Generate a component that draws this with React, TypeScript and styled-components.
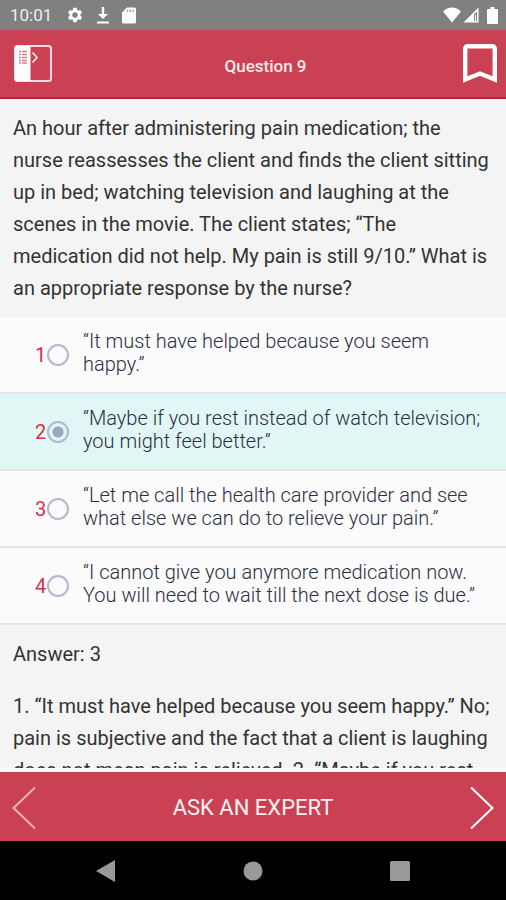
import React, { useState } from "react";
import styled, { createGlobalStyle } from "styled-components";

const GlobalStyle = createGlobalStyle`
  *, *::before, *::after { box-sizing: border-box; }
  body { margin: 0; background: #f4f4f4; font-family: Roboto, "Liberation Sans", sans-serif; }
  button { font: inherit; color: inherit; background: none; border: 0; padding: 0; cursor: pointer; }
`;

const Screen = styled.div`
  height: 100vh;
  display: flex;
  flex-direction: column;
`;

const StatusBar = styled.div`
  flex: none;
  height: 30px;
  padding: 0 8px 0 10px;
  display: flex;
  align-items: center;
  justify-content: space-between;
  background: #808080;
  color: #fff;
  font-size: 17px;
`;

const StatusGroup = styled.div<{ $gap: number }>`
  display: flex;
  align-items: center;
  gap: ${(p) => p.$gap}px;
  svg { display: block; }
`;

const Clock = styled.span`
  color: #eee;
  margin-right: 2px;
`;

const TopBar = styled.header`
  flex: none;
  height: 69px;
  padding: 0 9px 0 14px;
  display: grid;
  grid-template-columns: 1fr auto 1fr;
  align-items: center;
  background: #cb4154;
  border-bottom: 2px solid #bd1e38;
  color: #fff;
`;

const Title = styled.h1`
  margin: 0;
  padding: 4px 0 0 24px;
  font-size: 17px;
  font-weight: 500;
  color: #fde9ec;
  margin-right: 4px;
`;

const IconButton = styled.button<{ $align?: "start" | "end"; $faded?: boolean }>`
  justify-self: ${(p) => p.$align ?? "start"};
  opacity: ${(p) => (p.$faded ? 0.6 : 1)};
  svg { display: block; }
`;

const Content = styled.main`
  flex: 1;
  min-height: 0;
  overflow: hidden;
  background: #f4f4f4;
  border-bottom: 4px solid #fafafa;
`;

const Passage = styled.section`
  padding: 13px 12px 13px 13px;
  color: #333;
  font-size: 20px;
  line-height: 32px;
`;

const Paragraph = styled.p`
  margin: 0;
  & + & { margin-top: 20px; }
`;

const Options = styled.fieldset`
  margin: 0;
  padding: 0;
  border: 0;
  min-width: 0;
`;

const Option = styled.label<{ $selected: boolean }>`
  min-height: 77px;
  padding: 13px 16px 12px 35px;
  display: grid;
  grid-template-columns: 12px 22px 1fr;
  align-items: center;
  background: ${(p) => (p.$selected ? "#e0f7f6" : "#fbfbfb")};
  border-bottom: 2px solid #e3e6e6;
  font-size: 20px;
  line-height: 23px;
  cursor: pointer;
`;

const OptionNumber = styled.span`
  color: #d0354b;
`;

const Radio = styled.input`
  appearance: none;
  width: 22px;
  height: 22px;
  margin: 0;
  border: 2px solid #b3b8cc;
  border-radius: 50%;
  cursor: pointer;
  &:checked {
    background: radial-gradient(circle, #9ba9bf 0 5px, transparent 6px);
  }
`;

const OptionText = styled.span`
  padding: 0 0 4px 14px;
  color: #2c2f42;
  font-weight: 300;
`;

const ActionBar = styled.footer`
  flex: none;
  height: 69px;
  padding: 2px 11px 0;
  display: flex;
  align-items: center;
  justify-content: space-between;
  background: #cb4154;
  color: #fff;
`;

const AskButton = styled.button`
  && { color: #fff0f2; }
  && { font-size: 22px; }
`;

const SystemNav = styled.nav`
  flex: none;
  height: 59px;
  padding: 0 96px;
  display: flex;
  align-items: center;
  justify-content: space-between;
  background: #000;
  svg { display: block; }
`;

const options = [
  "“It must have helped because you seem happy.”",
  "“Maybe if you rest instead of watch television; you might feel better.”",
  "“Let me call the health care provider and see what else we can do to relieve your pain.”",
  "“I cannot give you anymore medication now. You will need to wait till the next dose is due.”",
];

const GearIcon = () => (
  <svg width="18" height="18" viewBox="0 0 24 24" fill="#fff" aria-hidden="true">
    <path d="M19.14 12.94c.04-.3.06-.61.06-.94 0-.32-.02-.64-.07-.94l2.03-1.58a.49.49 0 0 0 .12-.61l-1.92-3.32a.49.49 0 0 0-.59-.22l-2.39.96c-.5-.38-1.03-.7-1.62-.94l-.36-2.54a.48.48 0 0 0-.48-.41h-3.84a.48.48 0 0 0-.47.41l-.36 2.54c-.59.24-1.13.57-1.62.94l-2.39-.96a.48.48 0 0 0-.59.22L2.74 8.87a.48.48 0 0 0 .12.61l2.03 1.58c-.05.3-.09.63-.09.94s.02.64.07.94l-2.03 1.58a.49.49 0 0 0-.12.61l1.92 3.32c.12.22.37.29.59.22l2.39-.96c.5.38 1.03.7 1.62.94l.36 2.54c.05.24.24.41.48.41h3.84c.24 0 .44-.17.47-.41l.36-2.54c.59-.24 1.13-.56 1.62-.94l2.39.96c.22.08.47 0 .59-.22l1.92-3.32a.48.48 0 0 0-.12-.61zM12 15.6A3.6 3.6 0 1 1 12 8.400a3.600 3.600 0 0 1 0 7.200z" />
  </svg>
);

const DownloadIcon = () => (
  <svg width="14" height="17" viewBox="0 0 14 17" fill="#fff" aria-hidden="true">
    <path d="M5.800 0h2.400v7H12l-5 5-5-5h3.800zM1 14.500h12v2H1z" />
  </svg>
);

const CardIcon = () => (
  <svg width="14" height="17" viewBox="0 0 14 17" aria-hidden="true">
    <path d="M5 .5h7.500A1.500 1.500 0 0 1 14 2v13a1.500 1.500 0 0 1-1.500 1.500h-11A1.500 1.500 0 0 1 0 15V5.500z" fill="#fff" />
    <path d="M5.500 2.500v2.500M8.300 2.500v2.500M11.100 2.500v2.500" stroke="#aaa" strokeWidth="1.500" />
  </svg>
);

const WifiIcon = () => (
  <svg width="18" height="16" viewBox="0 0 18 16" fill="#fff" aria-hidden="true">
    <path d="M0 4.500Q4 .5 9 .5t9 4L9 15.500z" />
  </svg>
);

const SignalIcon = () => (
  <svg width="16" height="16" viewBox="0 0 16 16" fill="#fff" aria-hidden="true">
    <path d="M.5 15.500L15.500.5v15zM11 7.500V14h3V4.500z" fillRule="evenodd" />
    <path d="M12 8h1v6h-1z" />
  </svg>
);

const BatteryIcon = () => (
  <svg width="11" height="17" viewBox="0 0 11 17" fill="#fff" aria-hidden="true">
    <path d="M3.500 0h4v2H10a1 1 0 0 1 1 1v13a1 1 0 0 1-1 1H1a1 1 0 0 1-1-1V3a1 1 0 0 1 1-1h2.500z" />
  </svg>
);

const Signals = styled(StatusGroup)`
  svg:last-child { margin-left: 6px; }
`;

const PanelIcon = () => (
  <svg width="38" height="37" viewBox="0 0 38 37" aria-hidden="true">
    <rect x="1" y="1" width="36" height="35" rx="2.500" fill="none" stroke="#f7dfe3" strokeWidth="2" />
    <path d="M3 1h13.500v35H3a2 2 0 0 1-2-2V3a2 2 0 0 1 2-2z" fill="#fff" />
    <path d="M5 6.500h2m1 0h5M5 9.500h2m1 0h5M5 12.500h2m1 0h5M5 15.500h2m1 0h5M5 18h2m1 0h5" stroke="#d97a88" strokeWidth="1.500" />
    <path d="M18.500 7.500l4.500 5-4.500 5" fill="none" stroke="#f9e2e6" strokeWidth="1.800" />
  </svg>
);

const BookmarkIcon = () => (
  <svg width="34" height="39" viewBox="0 0 34 39" aria-hidden="true">
    <path d="M2.200 35.500V4.500A2.200 2.200 0 0 1 4.400 2.300h25.200a2.200 2.200 0 0 1 2.200 2.200v31L17 29.500z" fill="none" stroke="#fff" strokeWidth="4.400" />
  </svg>
);

const Chevron = ({ flip }: { flip?: boolean }) => (
  <svg width="26" height="44" viewBox="0 0 26 44" fill="none" stroke="#fff" strokeWidth="2" aria-hidden="true">
    <path d={flip ? "M2 1.500l21.500 20.500L2 42.500" : "M24 1.500L2.500 22 24 42.500"} />
  </svg>
);

export default function App() {
  const [selected, setSelected] = useState(1);
  return (
    <>
      <GlobalStyle />
      <Screen>
        <StatusBar>
          <StatusGroup $gap={12}>
            <Clock>10:01</Clock>
            <GearIcon />
            <DownloadIcon />
            <CardIcon />
          </StatusGroup>
          <Signals $gap={2}>
            <WifiIcon />
            <SignalIcon />
            <BatteryIcon />
          </Signals>
        </StatusBar>
        <TopBar>
          <IconButton aria-label="Open question list"><PanelIcon /></IconButton>
          <Title>Question 9</Title>
          <IconButton $align="end" aria-label="Bookmark"><BookmarkIcon /></IconButton>
        </TopBar>
        <Content>
          <Passage>
            <Paragraph>
              An hour after administering pain medication; the nurse reassesses the client and finds the
              client sitting up in bed; watching television and laughing at the scenes in the movie. The
              client states; “The medication did not help. My pain is still 9/10.” What is an appropriate
              response by the nurse?
            </Paragraph>
          </Passage>
          <Options aria-label="Answers">
            {options.map((text, i) => (
              <Option key={text} $selected={i === selected}>
                <OptionNumber>{i + 1}</OptionNumber>
                <Radio type="radio" name="answer" checked={i === selected} onChange={() => setSelected(i)} />
                <OptionText>{text}</OptionText>
              </Option>
            ))}
          </Options>
          <Passage>
            <Paragraph>Answer: 3</Paragraph>
            <Paragraph>
              1. “It must have helped because you seem happy.” No; pain is subjective and the fact that a
              client is laughing does not mean pain is relieved. 2. “Maybe if you rest
            </Paragraph>
          </Passage>
        </Content>
        <ActionBar>
          <IconButton $faded aria-label="Previous question"><Chevron /></IconButton>
          <AskButton>ASK AN EXPERT</AskButton>
          <IconButton aria-label="Next question"><Chevron flip /></IconButton>
        </ActionBar>
        <SystemNav aria-label="System">
          <IconButton aria-label="Back">
            <svg width="19" height="22" viewBox="0 0 19 22" fill="#999"><path d="M19 0v22L0 11z" /></svg>
          </IconButton>
          <IconButton aria-label="Home">
            <svg width="20" height="20" viewBox="0 0 20 20" fill="#999"><circle cx="10" cy="10" r="9.500" /></svg>
          </IconButton>
          <IconButton aria-label="Recent apps">
            <svg width="20" height="20" viewBox="0 0 20 20" fill="#999"><rect width="20" height="20" rx="1.500" /></svg>
          </IconButton>
        </SystemNav>
      </Screen>
    </>
  );
}
